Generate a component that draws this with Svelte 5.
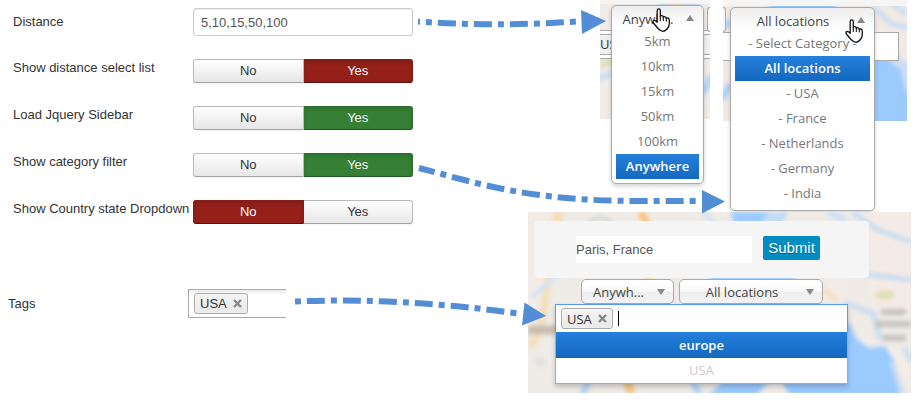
<script>
  let distances = '5,10,15,50,100';
  let place = 'Paris, France';
  let tagQuery = '';

  // tone is the colour of the active side
  let settings = [
    { id: 'distance-list', label: 'Show distance select list', value: 'Yes', tone: 'red' },
    { id: 'jquery-sidebar', label: 'Load Jquery Sidebar', value: 'Yes', tone: 'green' },
    { id: 'category-filter', label: 'Show category filter', value: 'Yes', tone: 'green' },
    { id: 'country-state', label: 'Show Country state Dropdown', value: 'No', tone: 'red' }
  ];

  const radiusOptions = ['5km', '10km', '15km', '50km', '100km', 'Anywhere'];
  const locationOptions = [
    '- Select Category -',
    'All locations',
    '- USA',
    '- France',
    '- Netherlands',
    '- Germany',
    '- India'
  ];
</script>

{#snippet hand()}
  <svg class="hand" viewBox="0 0 18 24" aria-hidden="true">
    <path
      d="M5.2 2.4C5.2.3 8.3.3 8.3 2.4V8.3C8.8 7.3 11.2 7.5 11.3 9.2 12 8.3 14.1 8.6 14.3 10.3 15.2 9.6 17.3 10 17.3 12.2V15.5C17.3 18.5 16.5 19.5 15 21 13.5 22.6 12.5 23.3 10.8 23.3 8.8 23.3 7.5 22 6 20.5L1.4 15C.2 13 1.6 12 3.6 12.8L5.2 14.2Z"
      fill="#fff" stroke="#111" stroke-width="1.3" stroke-linejoin="round"
    />
    <path d="M8.3 8V13M11.3 9V13M14.3 10V13.5" stroke="#111" stroke-width="1.1" fill="none" />
  </svg>
{/snippet}

{#snippet dropdown(current, options, selected)}
  <div class="dropdown">
    <button type="button" class="dropdown-head" aria-expanded="true">
      {current}
      <i class="arrow-up"></i>
    </button>
    <ul role="listbox" aria-label={selected}>
      {#each options as option}
        <li role="option" aria-selected={option === selected} class:active={option === selected}>
          {option}
        </li>
      {/each}
    </ul>
    {@render hand()}
  </div>
{/snippet}

{#snippet chip(name)}
  <span class="chip">
    {name}
    <button type="button" aria-label="Remove {name}">
      <svg viewBox="0 0 9 9"><path d="M1 1L8 8M8 1L1 8" stroke="#888" stroke-width="2.4" /></svg>
    </button>
  </span>
{/snippet}

<main class="page">
  <form class="settings">
    <div class="row">
      <label class="name" for="distance">Distance</label>
      <input id="distance" class="text" type="text" bind:value={distances} />
    </div>

    {#each settings as setting}
      <div class="row" role="radiogroup" aria-labelledby={setting.id}>
        <span class="name" id={setting.id}>{setting.label}</span>
        <div class="toggle {setting.tone}">
          {#each ['No', 'Yes'] as choice}
            <label class:on={setting.value === choice}>
              <input type="radio" name={setting.id} value={choice} bind:group={setting.value} />
              {choice}
            </label>
          {/each}
        </div>
      </div>
    {/each}

    <div class="row tags">
      <span class="name">Tags</span>
      <div class="tag-box">{@render chip('USA')}</div>
    </div>
  </form>

  <section class="examples">
    <div class="open-menus">
      <div class="snap radius">
        <svg class="map" viewBox="0 0 110 119" preserveAspectRatio="none" aria-hidden="true">
          <rect width="110" height="119" fill="#f1ece7" />
          <g class="soft">
            <path d="M0 64L20 61" stroke="#dfe0bb" stroke-width="8" />
            <path d="M-4 79L14 73" stroke="#c9dff8" stroke-width="7" />
            <path d="M58 5H100" stroke="#8fc0f8" stroke-width="3" />
            <path d="M70 4H84" stroke="#f4bd72" stroke-width="3" />
            <path d="M98 93Q106 91 112 76" stroke="#b3d5fb" stroke-width="8" fill="none" />
          </g>
        </svg>
        <div class="strip"></div>
        <div class="band"><span class="cut-chip">USA</span></div>
        <span class="edge left"></span>
        {@render dropdown('Anywh...', radiusOptions, 'Anywhere')}
      </div>

      <div class="snap locations">
        <svg class="map" viewBox="0 0 184 121" preserveAspectRatio="none" aria-hidden="true">
          <rect width="184" height="121" fill="#f2ebe5" />
          <g class="soft">
            <path d="M42 0H118L108 12H50Z" fill="#9bcaff" />
            <path d="M150 6L168 24L190 28M166 2L184 14" stroke="#c9ddf3" stroke-width="5" fill="none" />
            <path d="M-2 24H8M-2 100L8 84" stroke="#a9d0fb" stroke-width="7" />
            <path d="M140 50H174L176 60L190 64V130H140Z" fill="#9bcaff" />
            <path d="M165 60L178 58L190 66V100L182 88L178 70Z" fill="#cfdff0" />
          </g>
        </svg>
        <div class="strip"></div>
        <div class="band"></div>
        <span class="edge right"></span>
        {@render dropdown('All locations', locationOptions, 'All locations')}
      </div>
    </div>

    <div class="finder">
      <svg class="map" viewBox="0 0 383 181" preserveAspectRatio="none" aria-hidden="true">
        <rect width="383" height="181" fill="#efebe7" />
        <g class="soft">
          <path d="M0 0H24L14 70L0 130Z" fill="#f5ebe6" />
          <path d="M33 0Q20 60 17 90T2 135" stroke="#f2dfb8" stroke-width="7" fill="none" />
          <path d="M30 2L26 9" stroke="#f2dca8" stroke-width="6" />
          <path d="M0 118H30" stroke="#c9bcae" stroke-width="9" />
          <path d="M60 11Q72 2 84 11" stroke="#d3d7da" stroke-width="4" fill="none" />
          <circle cx="12" cy="150" r="5" fill="#e0e1e3" />
          <path d="M113 0L119 12M120 66L130 90M97 160L103 182" stroke="#f7c583" stroke-width="8" />
          <path d="M60 170L54 184M165 170L172 184" stroke="#aed2fb" stroke-width="6" />
          <path d="M176 0L186 12M4 85L34 58" stroke="#d3e3f6" stroke-width="5" />
          <path d="M203 0H260L252 12H206ZM180 64H264L296 96V110H200Z" fill="#9bcaff" />
          <path d="M240 0H258L250 12H232Z" fill="#c3dcf6" />
          <path d="M266 60L318 60L322 104L300 98Z" fill="#f2ece7" />
          <path d="M340 0H383V110L342 84V66Z" fill="#f5ebe6" />
          <path d="M300 0L318 8M324 0L350 18L384 30M336 62L384 68M316 90L346 102L352 128" stroke="#c6dcf3" stroke-width="5" fill="none" />
          <path d="M282 70L310 88" stroke="#f3dfc5" stroke-width="6" />
          <path d="M306 106L322 112L328 126L340 136L356 134L366 142L372 184H180L196 168L306 166Z" fill="#9bcaff" />
          <path d="M228 184L240 170H254L262 184Z" fill="#f0ece8" />
          <path d="M357 134L383 142V160L376 172L367 150Z" fill="#f4ece7" />
          <path d="M364 150L374 182M376 136L384 150" stroke="#c6dcf3" stroke-width="5" />
          <ellipse cx="357" cy="83" rx="10" ry="5" fill="#dfe0ba" />
          <path d="M353 100H378M347 112H383M355 126H378" stroke="#c4c1bb" stroke-width="6" />
        </g>
      </svg>

      <form class="search">
        <input type="text" aria-label="Place" bind:value={place} />
        <button type="button">Submit</button>
      </form>

      <div class="filters">
        <div class="picker small">
          <select aria-label="Distance"><option>Anywh...</option></select>
          <i class="arrow-down"></i>
        </div>
        <div class="picker">
          <select aria-label="Location"><option>All locations</option></select>
          <i class="arrow-down"></i>
        </div>
      </div>

      <div class="tag-picker">
        <div class="tag-field">
          {@render chip('USA')}
          <i class="caret"></i>
          <input type="text" aria-label="Tags" bind:value={tagQuery} />
        </div>
        <ul role="listbox" aria-label="Tag list">
          <li class="active" role="option" aria-selected="true">europe</li>
          <li class="used" role="option" aria-selected="false" aria-disabled="true">USA</li>
        </ul>
      </div>
    </div>
  </section>

  <!-- Arrows from each setting to the control it affects -->
  <svg class="arrows" width="920" height="400" viewBox="0 0 920 400" aria-hidden="true">
    <g fill="none" stroke="#538dd5" stroke-width="6">
      <path d="M418 21.5Q495 27 577 21.5" stroke-dasharray="18 6 6 6" stroke-dashoffset="16" />
      <path d="M419 168C480 184 530 201 640 201H697" stroke-dasharray="18 6 6 6" stroke-dashoffset="2" />
      <path d="M295 301.5Q400 297 518 313.5" stroke-dasharray="6 6 18 6" />
    </g>
    <g fill="#538dd5">
      <path d="M581 10L606 21L582 34Z" />
      <path d="M702 190L725 201.5L702 213.5Z" />
      <path d="M524.5 302.5L546 316L522 325.5Z" />
    </g>
  </svg>
</main>

<style>
  :global(body) {
    background: #fff;
  }

  .page {
    position: relative;
    display: flex;
    font-family: "Liberation Sans", Arial, sans-serif;
    font-size: 13px;
    line-height: 18px;
    color: #333;
  }

  .page :is(input, button, select) {
    box-sizing: border-box;
    margin: 0;
    font: inherit;
    color: inherit;
  }

  ul {
    margin: 0;
    padding: 0;
    list-style: none;
  }

  /* Settings form */
  .settings {
    flex: 0 0 528px;
    box-sizing: border-box;
    display: flex;
    flex-direction: column;
    gap: 23px;
    padding: 8px 115px 0 13px;
  }
  .row {
    display: flex;
  }
  .name {
    flex: 0 0 180px;
    white-space: nowrap;
  }
  .row:first-child {
    align-items: center;
  }
  .text {
    flex: 1;
    min-width: 0;
    height: 28px;
    padding: 0 7px;
    border: 1px solid #ccc;
    border-radius: 3px;
    background: #fff;
    box-shadow: inset 0 1px 1px rgba(0, 0, 0, 0.08);
  }
  .page .text {
    color: #555;
  }

  .toggle {
    flex: 1;
    display: flex;
  }
  .toggle label {
    flex: 1;
    box-sizing: border-box;
    height: 24px;
    line-height: 22px;
    text-align: center;
    border: 1px solid #bbb;
    border-bottom-color: #a2a2a2;
    background: linear-gradient(#fff, #e6e6e6);
    box-shadow: 0 1px 2px rgba(0, 0, 0, 0.05);
  }
  .toggle label:first-child {
    border-radius: 3px 0 0 3px;
  }
  .toggle label:last-child {
    border-left-width: 0;
    border-radius: 0 3px 3px 0;
  }
  .toggle input {
    position: absolute;
    opacity: 0;
    pointer-events: none;
  }
  .toggle .on {
    color: #fff;
    text-shadow: 0 -1px 0 rgba(0, 0, 0, 0.25);
    box-shadow: inset 0 2px 4px rgba(0, 0, 0, 0.15);
  }
  .red .on {
    background: #942019;
    border-color: #861d17 #861d17 #5a100c;
  }
  .green .on {
    background: #358035;
    border-color: #2c6f2c #2c6f2c #1f5a1f;
  }

  .tags {
    align-items: center;
    margin: 42px 0 0 -5px;
  }
  .tag-box {
    box-sizing: border-box;
    width: 98px;
    height: 29px;
    padding: 3px 5px;
    border: 1px solid #aaa;
    border-right: 0;
    background: linear-gradient(#eee 1px, #fff 5px);
  }

  .chip {
    box-sizing: border-box;
    display: inline-flex;
    align-items: center;
    gap: 6px;
    height: 21px;
    padding: 0 5px;
    border: 1px solid #aaa;
    border-radius: 3px;
    background: linear-gradient(#f4f4f4, #e8e8e8);
    box-shadow: inset 0 0 2px #fff;
  }
  .chip button {
    display: flex;
    padding: 0;
    border: 0;
    background: none;
  }
  .chip svg {
    width: 9px;
    height: 9px;
  }

  /* Front-end examples */
  .examples {
    flex: 1;
    min-width: 383px;
    margin-right: 9px;
    font-family: "Open Sans", sans-serif;
  }
  .map {
    position: absolute;
    inset: 0;
    width: 100%;
    height: 100%;
  }
  .soft {
    filter: blur(2px);
  }

  .open-menus {
    display: flex;
    gap: 13px;
    height: 212px;
    padding-left: 72px;
  }
  .snap {
    position: relative;
    flex: 0 0 110px;
    height: 119px;
  }
  .locations {
    flex-basis: 184px;
    height: 121px;
  }
  .strip {
    position: relative;
    height: 4px;
    margin-bottom: 26px;
    background: #f5f5f5;
  }
  .locations .strip {
    height: 6px;
  }
  .band {
    position: relative;
    box-sizing: border-box;
    height: 29px;
    padding-top: 3px;
    overflow: hidden;
    border: 1px solid #aaa;
    border-width: 1px 0;
    background: #fff;
  }
  .locations .band {
    margin-right: 8px;
    border-right-width: 1px;
  }
  .cut-chip {
    display: block;
    height: 19px;
    border: 1px solid #aaa;
    border-width: 1px 0;
    background: #f0f0f0;
  }
  .edge {
    position: absolute;
    top: 7px;
    width: 2px;
    height: 23px;
    border: 1px solid #aaa;
    background: #f6f6f6;
  }
  .edge.left {
    right: 0;
    border-right: 0;
    border-radius: 3px 0 0 3px;
  }
  .edge.right {
    left: 0;
    border-left: 0;
    border-radius: 0 3px 3px 0;
  }

  .dropdown {
    position: absolute;
    top: 5px;
    left: 11px;
    right: 6px;
    box-sizing: border-box;
    padding: 0 4px 4px;
    border: 1px solid #aaa;
    border-radius: 5px;
    background: linear-gradient(#eee, #fff 22px);
    box-shadow: 0 2px 4px rgba(0, 0, 0, 0.18);
  }
  .locations .dropdown {
    top: 7px;
    left: 7px;
    right: 32px;
  }
  .dropdown-head {
    position: relative;
    display: block;
    width: 100%;
    height: 23px;
    padding: 2px 19px 0 0;
    border: 0;
    background: none;
    text-align: center;
  }
  .page .dropdown-head {
    color: #444;
  }
  .dropdown li {
    line-height: 25px;
    color: #777;
    text-align: center;
    white-space: nowrap;
  }
  .examples li.active {
    color: #fff;
    font-weight: 600;
    background: linear-gradient(#257fdc, #1468be);
  }
  .arrow-up,
  .arrow-down {
    position: absolute;
    right: 5px;
    top: 10px;
    border: 4px solid transparent;
    pointer-events: none;
  }
  .arrow-up {
    top: 9px;
    border-width: 0 4px 6px;
    border-bottom-color: #888;
  }
  .arrow-down {
    right: 9px;
    border-width: 6px 4px 0;
    border-top-color: #888;
  }
  .hand {
    position: absolute;
    top: 2px;
    left: 40px;
    width: 18px;
    height: 24px;
  }
  .locations .hand {
    top: 11px;
    left: 114px;
  }

  /* Search panel over the map */
  .finder {
    position: relative;
    box-sizing: border-box;
    padding: 9px 42px 9px 6px;
  }
  .search {
    position: relative;
    display: flex;
    align-items: flex-start;
    gap: 11px;
    padding: 15px 49px 15px 42px;
    border-radius: 4px;
    background: #f5f5f5;
    font-family: "Liberation Sans", Arial, sans-serif;
  }
  .search input {
    flex: 1;
    min-width: 0;
    height: 27px;
    padding: 0;
    border: 0;
    background: #fff;
  }
  .page .search input {
    color: #555;
  }
  .page .search button {
    width: 57px;
    height: 24px;
    padding: 0;
    border: 0;
    border-radius: 2px;
    background: #008ec2;
    color: #fff;
    font-size: 15px;
    text-shadow: 0 1px 1px rgba(0, 0, 0, 0.3);
  }

  .filters {
    position: relative;
    display: flex;
    gap: 5px;
    margin: 1px 46px 0 47px;
  }
  .picker {
    position: relative;
    flex: 1;
  }
  .picker.small {
    flex: 0 0 93px;
  }
  .picker select {
    display: block;
    width: 100%;
    height: 25px;
    padding: 0 18px 0 0;
    border: 1px solid #aaa;
    border-radius: 5px;
    appearance: none;
    background: linear-gradient(#fff 20%, #f6f6f6 50%, #eee 52%, #f4f4f4);
    text-align: center;
    text-align-last: center;
  }
  .page .picker select {
    color: #444;
  }

  .tag-picker {
    position: relative;
    margin: 0 21px;
    border: 1px solid #aaa;
    border-top: 0;
    background: #fff;
    box-shadow: 0 3px 5px rgba(0, 0, 0, 0.2);
  }
  .tag-field {
    display: flex;
    align-items: center;
    gap: 5px;
    height: 27px;
    margin: 0 -1px;
    padding-left: 5px;
    border: 1px solid #5897fb;
    border-bottom: 0;
  }
  .tag-field input {
    flex: 1;
    min-width: 0;
    padding: 0;
    border: 0;
    outline: 0;
    background: none;
  }
  .caret {
    width: 1px;
    height: 15px;
    background: #000;
  }
  .tag-picker li {
    line-height: 26px;
    text-align: center;
  }
  .tag-picker .used {
    line-height: 25px;
    color: #ccc;
  }

  .arrows {
    position: absolute;
    top: 0;
    left: 0;
    pointer-events: none;
  }
</style>
